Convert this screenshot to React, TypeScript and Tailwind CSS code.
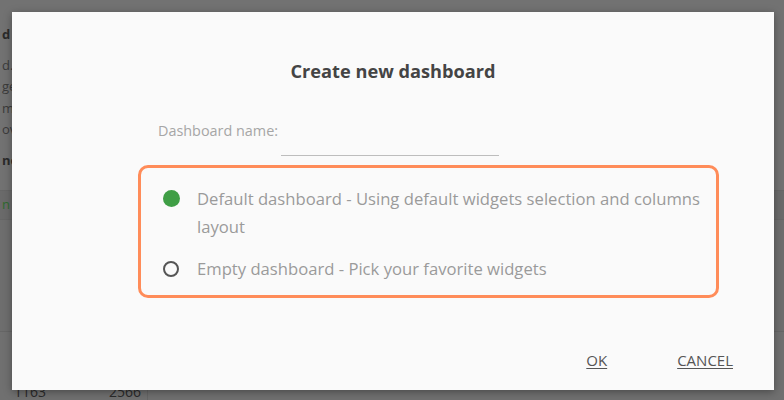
const font = { fontFamily: '"Open Sans", "Noto Sans", sans-serif' };

function BackgroundPage() {
	return (
		<div className="flex h-full w-full flex-col bg-[#727272] text-[#2a2a2a]">
			<div className="flex h-[190px] flex-col pl-[2px] pt-[24px] text-[13px] leading-[21.5px]">
				<span className="font-bold">d</span>
				<span className="mt-[9px] text-[#3a3a3a]">d.</span>
				<span className="text-[#3a3a3a]">ge</span>
				<span className="text-[#3a3a3a]">me</span>
				<span className="text-[#3a3a3a]">ove</span>
				<span className="mt-[9px] font-bold">nev</span>
			</div>
			<div className="flex h-[30px] items-center border-y border-[#666] bg-[#6a6a6a] pl-[2px] text-[13px] text-[#2f6b2f]">
				n %
			</div>
			<div className="h-[112px] border-b border-[#666] bg-[#6e6e6e]" />
			<div className="flex flex-1 bg-[#707070] text-[14px] leading-[16px] text-[#2a2a2a]">
				<div className="flex w-[148px] items-end gap-[63px] border-r border-[#666] pl-[14px]">
					<span>1163</span>
					<span>2566</span>
				</div>
			</div>
		</div>
	);
}

function Radio({ checked }: { checked: boolean }) {
	if (checked)
		return <span className="mt-[5px] block h-[17px] w-[17px] shrink-0 rounded-full bg-[#3f9e45]" />;
	return (
		<span className="mt-[6px] block h-[16px] w-[16px] shrink-0 rounded-full border-[2px] border-[#555] bg-transparent" />
	);
}

export default function App() {
	return (
		<div className="relative h-[400px] w-[784px] overflow-hidden" style={font}>
			<BackgroundPage />
			<div className="absolute left-[12px] top-[12px] flex h-[378px] w-[762px] flex-col bg-[#fafafa] shadow-[0_2px_8px_rgba(0,0,0,0.35)]">
				<h2 className="pt-[47px] text-center text-[18.2px] font-bold leading-[24px] text-[#444]">
					Create new dashboard
				</h2>
				<div className="mt-[38px] pl-[146px] text-[14.4px] leading-[20px] text-[#a6a6a6]">
					Dashboard name:
				</div>
				<div className="ml-[269px] h-[15px] w-[218px] border-b border-[#bdbdbd]" />
				<div className="ml-[126px] mt-[9px] flex w-[581px] flex-col gap-[14px] rounded-[10px] border-[3px] border-[#ff8c59] pb-[12px] pl-[22px] pr-[6px] pt-[17px] text-[16.65px] leading-[28px] text-[#9a9a9a]">
					<label className="flex gap-[17px]">
						<Radio checked />
						<span>Default dashboard - Using default widgets selection and columns layout</span>
					</label>
					<label className="flex gap-[18px]">
						<Radio checked={false} />
						<span>Empty dashboard - Pick your favorite widgets</span>
					</label>
				</div>
				<div className="mt-auto flex justify-end gap-[70px] pb-[20px] pr-[41px] text-[15px] leading-[20px] text-[#555]">
					<span className="underline underline-offset-2">OK</span>
					<span className="underline underline-offset-2">CANCEL</span>
				</div>
			</div>
		</div>
	);
}
